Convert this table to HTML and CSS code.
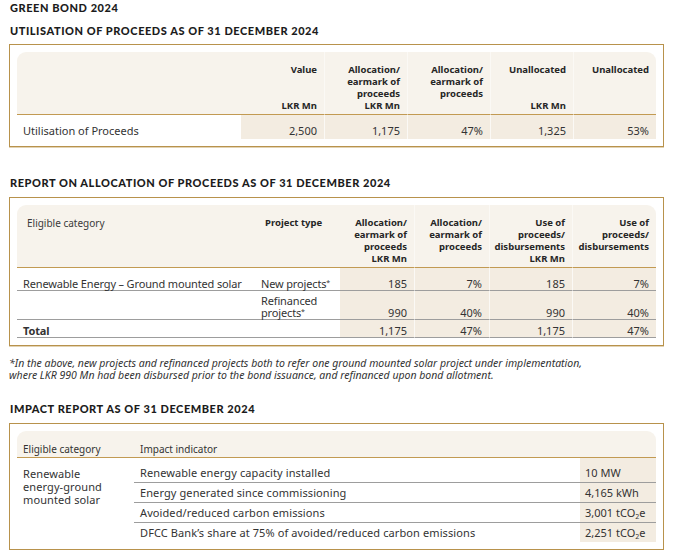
FILE: index.html
```html
<!DOCTYPE html>
<html lang="en">
<head>
<meta charset="utf-8">
<title>Green Bond 2024</title>
<link rel="stylesheet" href="styles.css">
</head>
<body>
<h1 class="title">GREEN BOND 2024</h1>

<h2 class="heading h-first">UTILISATION OF PROCEEDS AS OF 31 DECEMBER 2024</h2>
<div class="panel">
  <table class="tbl t1">
    <colgroup>
      <col class="c-lbl1"><col class="c83"><col class="c83"><col class="c83"><col class="c83"><col class="c83">
    </colgroup>
    <thead>
      <tr>
        <th class="lbl first"></th>
        <th>Value<br><br><br>LKR Mn</th>
        <th class="sep">Allocation/<br>earmark of<br>proceeds<br>LKR Mn</th>
        <th class="sep">Allocation/<br>earmark of<br>proceeds</th>
        <th class="sep">Unallocated<br><br><br>LKR Mn</th>
        <th class="sep last">Unallocated</th>
      </tr>
    </thead>
    <tbody>
      <tr>
        <td class="lbl">Utilisation of Proceeds</td>
        <td class="num">2,500</td>
        <td class="num sep">1,175</td>
        <td class="num sep">47%</td>
        <td class="num sep">1,325</td>
        <td class="num sep">53%</td>
      </tr>
    </tbody>
  </table>
</div>

<h2 class="heading h-second">REPORT ON ALLOCATION OF PROCEEDS AS OF 31 DECEMBER 2024</h2>
<div class="panel">
  <table class="tbl t2">
    <colgroup>
      <col class="c-lbl2"><col class="c-type"><col class="c74"><col class="c75"><col class="c83"><col class="c84">
    </colgroup>
    <thead>
      <tr>
        <th class="lbl plain first">Eligible category</th>
        <th class="lbl">Project type</th>
        <th>Allocation/<br>earmark of<br>proceeds<br>LKR Mn</th>
        <th class="sep">Allocation/<br>earmark of<br>proceeds</th>
        <th class="sep">Use of<br>proceeds/<br>disbursements<br>LKR Mn</th>
        <th class="sep last">Use of<br>proceeds/<br>disbursements</th>
      </tr>
    </thead>
    <tbody>
      <tr class="r-new">
        <td class="lbl">Renewable Energy – Ground mounted solar</td>
        <td class="lbl">New projects<span class="ast">*</span></td>
        <td class="num">185</td>
        <td class="num sep">7%</td>
        <td class="num sep">185</td>
        <td class="num sep">7%</td>
      </tr>
      <tr class="r-ref">
        <td class="lbl"></td>
        <td class="lbl">Refinanced<br>projects<span class="ast">*</span></td>
        <td class="num">990</td>
        <td class="num sep">40%</td>
        <td class="num sep">990</td>
        <td class="num sep">40%</td>
      </tr>
      <tr class="r-tot">
        <td class="lbl strong">Total</td>
        <td class="lbl"></td>
        <td class="num">1,175</td>
        <td class="num sep">47%</td>
        <td class="num sep">1,175</td>
        <td class="num sep">47%</td>
      </tr>
    </tbody>
  </table>
</div>

<p class="note">*In the above, new projects and refinanced projects both to refer one ground mounted solar project under implementation,<br>where LKR 990 Mn had been disbursed prior to the bond issuance, and refinanced upon bond allotment.</p>

<h2 class="heading h-third">IMPACT REPORT AS OF 31 DECEMBER 2024</h2>
<div class="panel">
  <table class="tbl t3">
    <colgroup>
      <col class="c-cat"><col class="c-ind"><col class="c-val">
    </colgroup>
    <thead>
      <tr>
        <th class="first">Eligible category</th>
        <th>Impact indicator</th>
        <th class="last"></th>
      </tr>
    </thead>
    <tbody>
      <tr class="r1">
        <td class="cat" rowspan="4">Renewable<br>energy-ground<br>mounted solar</td>
        <td class="ind">Renewable energy capacity installed</td>
        <td class="val">10 MW</td>
      </tr>
      <tr>
        <td class="ind">Energy generated since commissioning</td>
        <td class="val">4,165 kWh</td>
      </tr>
      <tr>
        <td class="ind">Avoided/reduced carbon emissions</td>
        <td class="val">3,001 tCO<sub>2</sub>e</td>
      </tr>
      <tr class="r-last">
        <td class="ind">DFCC Bank’s share at 75% of avoided/reduced carbon emissions</td>
        <td class="val">2,251 tCO<sub>2</sub>e</td>
      </tr>
    </tbody>
  </table>
</div>
</body>
</html>
```

FILE: styles.css
```css
html, body {
  margin: 0;
  padding: 0;
  background: #ffffff;
}

body {
  font-family: "Noto Sans", "Open Sans", sans-serif;
  color: #333333;
  width: 673px;
}

.title,
.heading {
  margin: 0 0 0 10px;
  font-family: "Lato", "Noto Sans", sans-serif;
  font-weight: 900;
  font-size: 11px;
  line-height: 14px;
  color: #1c1c1c;
  letter-spacing: 0.55px;
}

.title { margin-top: 1px; }
.h-first { margin-top: 9px; margin-bottom: 6px; }
.h-second { margin-top: 29px; margin-bottom: 7px; }
.h-third { margin-top: 21px; margin-bottom: 7px; }

.panel {
  margin-left: 9px;
  width: 655px;
  box-sizing: border-box;
  border: 1px solid #b8924c;
  padding: 7px;
  box-shadow: 0 1px 0 #e2d3b4;
}

.tbl {
  width: 639px;
  table-layout: fixed;
  border-collapse: separate;
  border-spacing: 0;
}

.c-lbl1 { width: 224px; }
.c83 { width: 83px; }
.c84 { width: 84px; }
.c74 { width: 74px; }
.c75 { width: 75px; }
.c-lbl2 { width: 238px; }
.c-type { width: 85px; }
.c-cat { width: 117px; }
.c-ind { width: 446px; }
.c-val { width: 76px; }

.tbl th {
  background: #f7f3ec;
  font-weight: 700;
  font-size: 9.5px;
  line-height: 12px;
  color: #262626;
  text-align: right;
  vertical-align: top;
  padding: 12px 7px 2px 2px;
  border-bottom: 1px solid #c29a52;
  white-space: nowrap;
}

.tbl th.first { border-top-left-radius: 9px; }
.tbl th.last { border-top-right-radius: 9px; }

.tbl th.sep,
.tbl td.sep {
  border-left: 1px solid #fbf9f5;
}

.tbl th.lbl {
  text-align: left;
  padding-left: 10px;
}

.tbl th.plain {
  font-weight: 400;
  color: #3a3a3a;
  font-size: 10px;
}

.tbl td {
  font-size: 11px;
  line-height: 12px;
  color: #333333;
  vertical-align: bottom;
}

.tbl td.num {
  background: #f3ece1;
  text-align: right;
  padding-right: 7px;
}

.tbl td.lbl {
  text-align: left;
  padding-left: 6px;
  padding-right: 2px;
  white-space: nowrap;
}

.strong { font-weight: 700; color: #1f1f1f; }

.ast {
  font-size: 7px;
  vertical-align: 3px;
  line-height: 0;
}

/* table 1 body */
.t1 td {
  padding-top: 9px;
  padding-bottom: 1px;
  line-height: 14px;
}

/* table 2 body */
.t2 tbody td {
  border-bottom: 1px solid #9d9d9d;
  padding-bottom: 0;
}
.t2 tbody td.lbl { letter-spacing: -0.15px; }
.t2 .r-new td { padding-top: 10px; }
.t2 .r-ref td { padding-top: 4px; }
.t2 .r-tot td { padding-top: 5px; }

/* table 3 */
.t3 th {
  font-weight: 400;
  font-size: 10px;
  text-align: left;
  color: #333333;
  padding: 12px 6px 2px 6px;
}

.t3 td {
  font-size: 11px;
  line-height: 14px;
  vertical-align: top;
  text-align: left;
  padding: 3px 6px 2px 6px;
  letter-spacing: 0.1px;
}

.t3 td.cat {
  line-height: 13px;
  padding-top: 9px;
}

.t3 .r1 td { padding-top: 8px; }
.t3 .r1 td.cat { padding-top: 9px; }

.t3 td.ind,
.t3 td.val {
  border-bottom: 1px solid #9d9d9d;
}

.t3 .r-last td.ind,
.t3 .r-last td.val {
  border-bottom: none;
}

.t3 td.val {
  background: #f3ece1;
  padding-left: 5px;
  letter-spacing: 0;
  white-space: nowrap;
}

.t3 sub {
  font-size: 7px;
  line-height: 0;
  vertical-align: -2px;
}

.note {
  margin: 11px 0 0 9px;
  font-style: italic;
  font-size: 10.5px;
  line-height: 12px;
  color: #333333;
}
```
